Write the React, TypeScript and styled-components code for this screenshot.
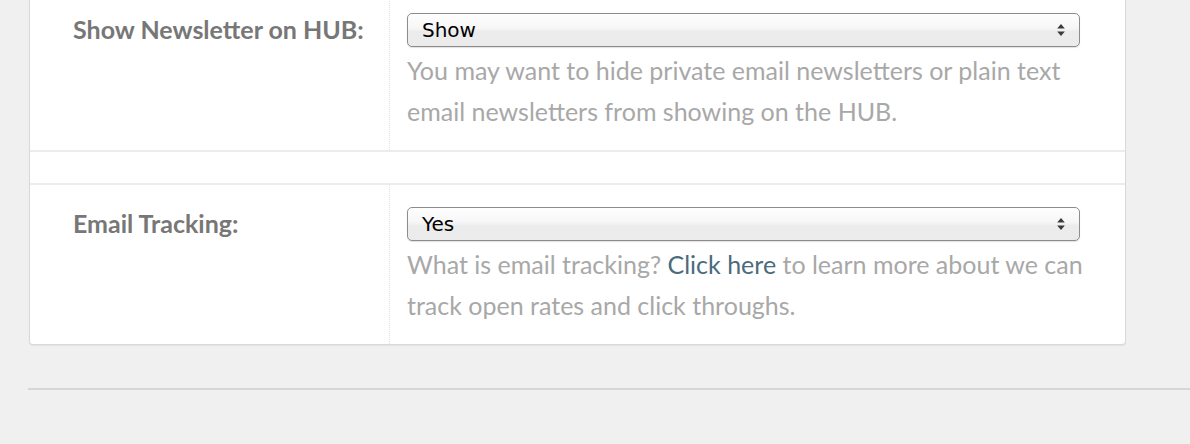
import React from "react";
import styled, { createGlobalStyle } from "styled-components";

const GlobalStyle = createGlobalStyle`
  html, body { margin: 0; padding: 0; }
  body {
    background: #f0f0f0;
    font-family: Lato, "Open Sans", sans-serif;
    width: 1190px;
    height: 444px;
    overflow: hidden;
  }
`;

const Page = styled.div`
  padding: 0 0 0 29px;
`;

const Card = styled.div`
  margin-top: -9px;
  width: 1095px;
  background: #fff;
  border: 1px solid #d9d9d9;
  border-top: none;
  border-radius: 0 0 4px 4px;
  box-shadow: 0 1px 1px rgba(0, 0, 0, 0.06);
`;

const Row = styled.div<{ $last?: boolean }>`
  display: grid;
  grid-template-columns: 359px 1fr;
  border-bottom: ${(p) => (p.$last ? "none" : "2px solid #ececec")};
`;

const Spacer = styled.div`
  height: 31px;
  border-bottom: 2px solid #ececec;
`;

const Label = styled.div`
  padding: 21px 0 0 43px;
  font-size: 25px;
  font-weight: 700;
  color: #777;
  line-height: 34px;
`;

const Field = styled.div`
  border-left: 1px dotted #e2e2e2;
  padding: 22px 45px 18px 17px;
`;

const SelectBox = styled.div`
  position: relative;
  box-sizing: border-box;
  height: 34px;
  border: 1px solid #8c8c8c;
  border-radius: 5px;
  background: linear-gradient(#fefefe 0%, #f6f6f6 45%, #ececec 55%, #ebebeb 100%);
  box-shadow: 0 1px 1px rgba(0, 0, 0, 0.12);
  display: flex;
  align-items: center;
  padding-left: 14px;
  font-family: "DejaVu Sans", Verdana, sans-serif;
  font-size: 20px;
  color: #000;
`;

const Arrows = styled.svg`
  position: absolute;
  right: 14px;
  top: 50%;
  transform: translateY(-50%);
`;

const Help = styled.p`
  margin: 3px -12px 0 0;
  font-size: 25px;
  line-height: 41px;
  color: #a8a8a8;
`;

const Link = styled.a`
  color: #4a6b7b;
  text-decoration: none;
`;

const Footer = styled.div`
  margin: 43px 0 0 -1px;
  border-top: 2px solid #d6d6d6;
`;

const Select = ({ value }: { value: string }) => (
  <SelectBox>
    {value}
    <Arrows width="8" height="13" viewBox="0 0 8 13">
      <path d="M4 0.5 L7.8 5 L0.2 5 Z" fill="#3a3a3a" />
      <path d="M0.2 8 L7.8 8 L4 12.5 Z" fill="#3a3a3a" />
    </Arrows>
  </SelectBox>
);

export default function App() {
  return (
    <>
      <GlobalStyle />
      <Page>
        <Card>
          <Row>
            <Label>Show Newsletter on HUB:</Label>
            <Field>
              <Select value="Show" />
              <Help>
                You may want to hide private email newsletters or plain text email newsletters from
                showing on the HUB.
              </Help>
            </Field>
          </Row>
          <Spacer />
          <Row $last>
            <Label>Email Tracking:</Label>
            <Field>
              <Select value="Yes" />
              <Help>
                What is email tracking? <Link href="#">Click here</Link> to learn more about we can
                track open rates and click throughs.
              </Help>
            </Field>
          </Row>
        </Card>
        <Footer />
      </Page>
    </>
  );
}
